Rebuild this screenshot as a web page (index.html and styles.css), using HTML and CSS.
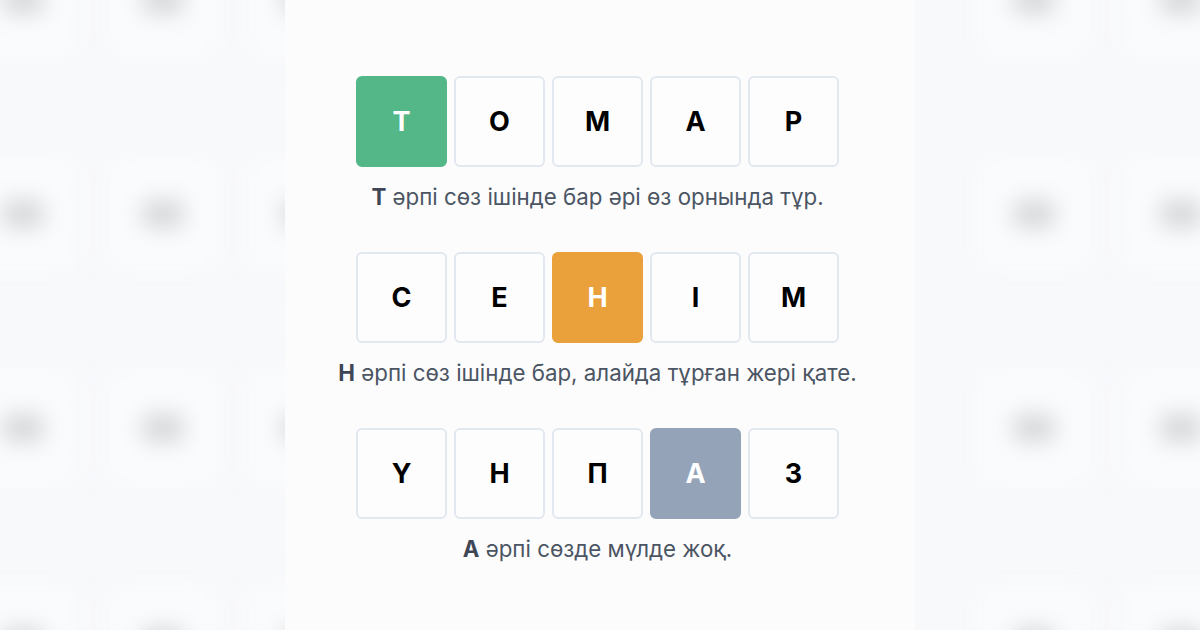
FILE: index.html
```html
<!DOCTYPE html>
<html lang="kk">
<head>
<meta charset="utf-8">
<title>Ереже</title>
<link rel="stylesheet" href="styles.css">
</head>
<body>
<div class="page">
  <div class="side side-left" aria-hidden="true">
    <div class="blur-grid">
      <div class="bt"></div><div class="bt"></div><div class="bt"></div>
      <div class="bt"></div><div class="bt"></div><div class="bt"></div>
      <div class="bt"></div><div class="bt"></div><div class="bt"></div>
      <div class="bt"></div><div class="bt"></div><div class="bt"></div>
    </div>
  </div>
  <main class="panel">
    <section class="example">
      <div class="row">
        <div class="tile correct">Т</div>
        <div class="tile">О</div>
        <div class="tile">М</div>
        <div class="tile">А</div>
        <div class="tile">Р</div>
      </div>
      <p class="caption"><b>Т</b> әрпі сөз ішінде бар әрі өз орнында тұр.</p>
    </section>
    <section class="example">
      <div class="row">
        <div class="tile">С</div>
        <div class="tile">Е</div>
        <div class="tile present">Н</div>
        <div class="tile">І</div>
        <div class="tile">М</div>
      </div>
      <p class="caption"><b>Н</b> әрпі сөз ішінде бар, алайда тұрған жері қате.</p>
    </section>
    <section class="example">
      <div class="row">
        <div class="tile">Ү</div>
        <div class="tile">Н</div>
        <div class="tile">П</div>
        <div class="tile absent">А</div>
        <div class="tile">З</div>
      </div>
      <p class="caption"><b>А</b> әрпі сөзде мүлде жоқ.</p>
    </section>
  </main>
  <div class="side side-right" aria-hidden="true">
    <div class="blur-grid">
      <div class="bt"></div><div class="bt"></div>
      <div class="bt"></div><div class="bt"></div>
      <div class="bt"></div><div class="bt"></div>
      <div class="bt"></div><div class="bt"></div>
    </div>
  </div>
</div>
</body>
</html>
```

FILE: styles.css
```css
* { box-sizing: border-box; }

html, body {
  margin: 0;
  padding: 0;
  width: 1200px;
  height: 630px;
  overflow: hidden;
  background: #f8f9fb;
  font-family: Inter, "Noto Sans", "DejaVu Sans", sans-serif;
}

.page {
  display: flex;
  width: 1200px;
  height: 630px;
}

.side {
  width: 285px;
  height: 630px;
  overflow: hidden;
  background: #f8f9fb;
}

.blur-grid {
  display: grid;
  grid-auto-rows: 214px;
  filter: blur(11px);
}

.side-left .blur-grid {
  grid-template-columns: repeat(3, 140px);
  margin-left: -47px;
  margin-top: -107px;
}

.side-right .blur-grid {
  grid-template-columns: repeat(2, 147px);
  margin-left: 45px;
  margin-top: -107px;
}

.bt {
  display: flex;
  align-items: center;
  justify-content: center;
  margin: 45px 12px;
  background: #fafbfc;
  border: 4px solid #f4f6f8;
  border-radius: 10px;
}

.bt::before {
  content: "";
  width: 42px;
  height: 28px;
  border-radius: 10px;
  background: #d6d7d9;
}

.panel {
  width: 630px;
  height: 630px;
  background: #fcfcfd;
  display: flex;
  flex-direction: column;
  align-items: center;
  gap: 41px;
  padding: 76px 5px 0 0;
}

.example {
  display: flex;
  flex-direction: column;
  align-items: center;
}

.row {
  display: flex;
  gap: 7px;
}

.tile {
  width: 91px;
  height: 91px;
  display: flex;
  align-items: center;
  justify-content: center;
  background: #fdfdfe;
  border: 2px solid #e2e8f0;
  border-radius: 6px;
  font-size: 27px;
  font-weight: 700;
  color: #000;
}

.tile.correct {
  background: #53b787;
  border-color: #53b787;
  color: #fff;
}

.tile.present {
  background: #eaa13b;
  border-color: #eaa13b;
  color: #fff;
}

.tile.absent {
  background: #94a3b8;
  border-color: #94a3b8;
  color: #fff;
}

.caption {
  margin: 16px 0 0;
  font-size: 22.3px;
  line-height: 28px;
  color: #4b5563;
  white-space: nowrap;
}

.caption b {
  font-weight: 700;
  color: #3f4756;
}
```
